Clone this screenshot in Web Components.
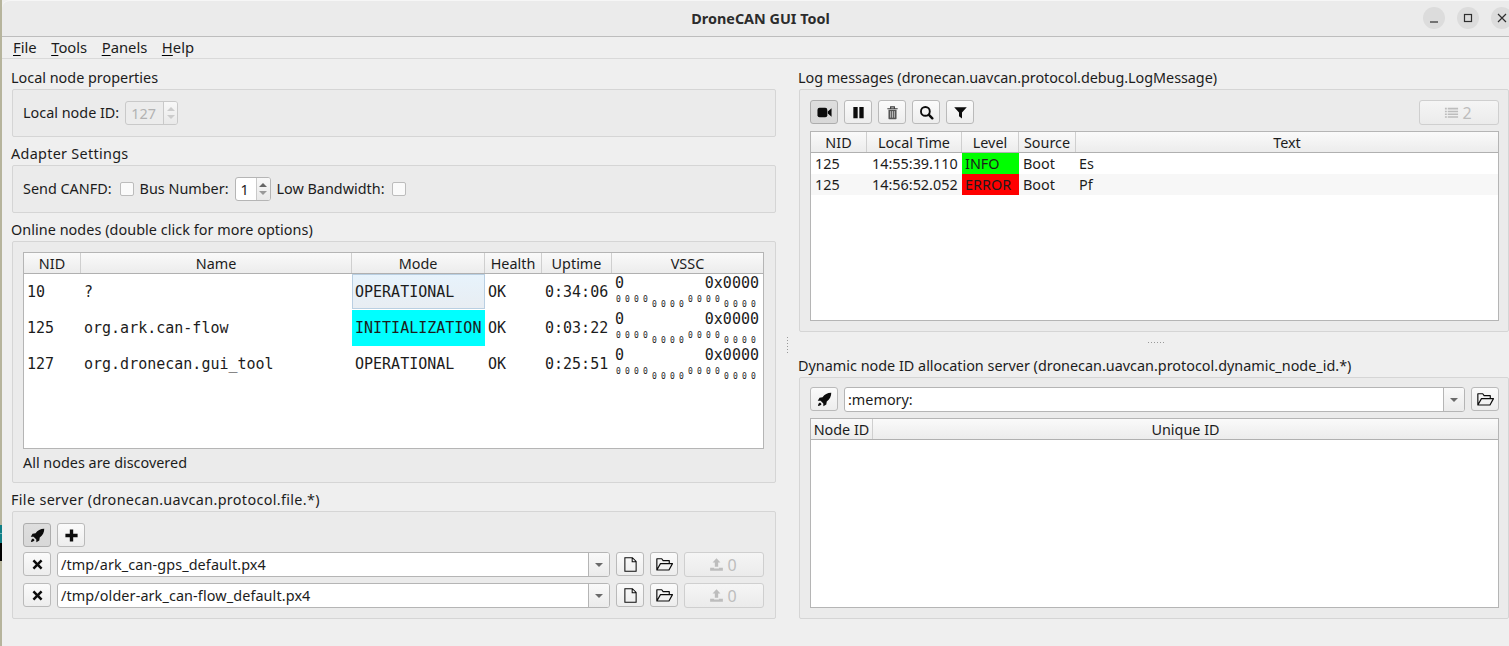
<!DOCTYPE html>
<html><head><meta charset="utf-8"><title>DroneCAN GUI Tool</title>
<style>
html,body{margin:0;padding:0;height:646px;overflow:hidden}
body{display:flex;font:14.4px/18px "Noto Sans",sans-serif;color:#1c1c1c;background:#efefef}
qt-menu-item u{text-decoration-thickness:1px;text-underline-offset:2px;text-decoration-color:#000}
</style></head><body>
<desk-edge></desk-edge>
<qt-window>
  <qt-titlebar slot="title">DroneCAN GUI Tool</qt-titlebar>
  <qt-menubar slot="menu">
    <qt-menu-item><u>F</u>ile</qt-menu-item>
    <qt-menu-item><u>T</u>ools</qt-menu-item>
    <qt-menu-item><u>P</u>anels</qt-menu-item>
    <qt-menu-item><u>H</u>elp</qt-menu-item>
  </qt-menubar>
  <qt-col slot="left">
    <qt-group heading="Local node properties" style="--box-h:48px;--pad-top:11px">
      <qt-line><span>Local node ID:</span><qt-spin value="127" disabled style="width:53px"></qt-spin></qt-line>
    </qt-group>
    <qt-group heading="Adapter Settings" style="--box-h:48px;--pad-top:11px;--track:.3px">
      <qt-line><span style="margin-right:2px">Send CANFD:</span><qt-check></qt-check><span>Bus Number:</span><qt-spin value="1" style="width:36px"></qt-spin><span style="margin-right:1px">Low Bandwidth:</span><qt-check></qt-check></qt-line>
    </qt-group>
    <qt-group heading="Online nodes (double click for more options)" style="--box-h:242px;--pad-top:10px;--track:.05px">
      <qt-table cols="57,271,133,57,70,151" heads="NID|Name|Mode|Health|Uptime|VSSC" style="height:197px;--row-h:36px;--font:15px 'DejaVu Sans Mono',monospace">
        <qt-row><qt-cell>10</qt-cell><qt-cell>?</qt-cell><qt-cell kind="sel">OPERATIONAL</qt-cell><qt-cell>OK</qt-cell><qt-cell>0:34:06</qt-cell><vssc-cell></vssc-cell></qt-row>
        <qt-row><qt-cell>125</qt-cell><qt-cell>org.ark.can-flow</qt-cell><qt-cell style="--bg:#00ffff">INITIALIZATION</qt-cell><qt-cell>OK</qt-cell><qt-cell>0:03:22</qt-cell><vssc-cell></vssc-cell></qt-row>
        <qt-row><qt-cell>127</qt-cell><qt-cell>org.dronecan.gui_tool</qt-cell><qt-cell>OPERATIONAL</qt-cell><qt-cell>OK</qt-cell><qt-cell>0:25:51</qt-cell><vssc-cell></vssc-cell></qt-row>
      </qt-table>
      <qt-status>All nodes are discovered</qt-status>
    </qt-group>
    <qt-group heading="File server (dronecan.uavcan.protocol.file.*)" style="--box-h:108px;--pad-top:11px;--track:.33px">
      <qt-line tight><qt-btn icon="rocket" checked></qt-btn><qt-btn icon="plus"></qt-btn></qt-line>
      <qt-line tight style="margin-top:5px"><qt-btn icon="times"></qt-btn><qt-combo value="/tmp/ark_can-gps_default.px4" style="--combo-track:.11px"></qt-combo><qt-btn icon="file"></qt-btn><qt-btn icon="folder"></qt-btn><qt-btn icon="upload" disabled wide>0</qt-btn></qt-line>
      <qt-line tight style="margin-top:6px"><qt-btn icon="times"></qt-btn><qt-combo value="/tmp/older-ark_can-flow_default.px4" style="--combo-track:.11px"></qt-combo><qt-btn icon="file"></qt-btn><qt-btn icon="folder"></qt-btn><qt-btn icon="upload" disabled wide>0</qt-btn></qt-line>
    </qt-group>
  </qt-col>
  <qt-vsplit slot="split"></qt-vsplit>
  <qt-col slot="right">
    <qt-group heading="Log messages (dronecan.uavcan.protocol.debug.LogMessage)" style="--box-h:243px;--pad-top:10px;--pad-r:9px;--track:-.04px">
      <qt-line tight><qt-btn icon="camera" checked></qt-btn><qt-btn icon="pause"></qt-btn><qt-btn icon="trash"></qt-btn><qt-btn icon="search"></qt-btn><qt-btn icon="filter"></qt-btn><qt-spacer></qt-spacer><qt-btn icon="list" disabled wide>2</qt-btn></qt-line>
      <qt-table cols="56,95,57,57,422" heads="NID|Local Time|Level|Source|Text" style="margin-top:6px;height:190px;--row-h:21px;--cell-pad:4px">
        <qt-row><qt-cell>125</qt-cell><qt-cell style="--cell-pad:5px">14:55:39.110</qt-cell><qt-cell style="--bg:#00ff00;--cell-pad:3px">INFO</qt-cell><qt-cell>Boot</qt-cell><qt-cell style="--cell-pad:3px">Es</qt-cell></qt-row>
        <qt-row alt><qt-cell>125</qt-cell><qt-cell style="--cell-pad:5px">14:56:52.052</qt-cell><qt-cell style="--bg:#ff0000;--cell-pad:3px">ERROR</qt-cell><qt-cell>Boot</qt-cell><qt-cell style="--cell-pad:3px">Pf</qt-cell></qt-row>
      </qt-table>
    </qt-group>
    <qt-hsplit></qt-hsplit>
    <qt-group heading="Dynamic node ID allocation server (dronecan.uavcan.protocol.dynamic_node_id.*)" style="--box-h:242px;--pad-top:9px;--pad-r:9px">
      <qt-line tight><qt-btn icon="rocket"></qt-btn><qt-combo value=":memory:"></qt-combo><qt-btn icon="folder"></qt-btn></qt-line>
      <qt-table cols="62,625" heads="Node ID|Unique ID" style="margin-top:6px;height:190px"></qt-table>
    </qt-group>
  </qt-col>
</qt-window>
<script>
const ICONS={
rocket:'<path fill="currentColor" d="M15.2.8C11.3.7 8.2 2.5 5.9 5.6L2.7 6.1.8 9.2l3 .1 2.9 2.9.1 3 3.1-1.9.5-3.2c3.1-2.3 4.9-5.4 4.8-9.3zM3.2 11.2c-1.1.4-1.8 1.3-2.2 3.8 2.5-.4 3.4-1.1 3.8-2.2z"/>',
plus:'<path fill="currentColor" d="M6.2 1.5h3.6v4.7h4.7v3.6H9.8v4.7H6.2V9.8H1.5V6.2h4.7z"/>',
times:'<path fill="currentColor" d="M4.6 2.7 8 6.1l3.4-3.4 1.9 1.9L9.9 8l3.4 3.4-1.9 1.9L8 9.9l-3.4 3.4-1.9-1.9L6.1 8 2.7 4.6z"/>',
file:'<path fill="none" stroke="currentColor" stroke-width="1.1" d="M2 .8h8l4 4v10.4H2zM9.8.8v4.2H14"/>',
folder:'<path fill="none" stroke="currentColor" stroke-width="1.1" stroke-linejoin="round" d="M.8 13.2V2.6h4.6l1.3 1.8h5.8v2.8M.8 13.2h11.4l3.3-6H4.2z"/>',
upload:'<path fill="currentColor" d="M8 1.2l4.2 4.6H9.8v4.6H6.2V5.8H3.8zM1.2 11.4h4.2v.9h5.2v-.9h4.2v3.2H1.2z"/>',
camera:'<rect x=".5" y="3" width="10.5" height="10" rx="2.2" fill="currentColor"/><path fill="currentColor" d="M11.5 7 15.5 3.4v9.2L11.5 9z"/>',
pause:'<path fill="currentColor" d="M2.5 2h4.6v12H2.5zM8.9 2h4.6v12H8.9z"/>',
trash:'<g fill="none" stroke="#3c3c3c"><path stroke-width="1.2" d="M2.5 4h11M6 3.8V2h4v1.8"/></g><path fill="#555" d="M3.7 5h8.6v9.4a.7.7 0 0 1-.7.7H4.4a.7.7 0 0 1-.7-.7z"/><path stroke="#ddd" stroke-width=".8" d="M6 6.5v7M8 6.5v7M10 6.5v7"/>',
search:'<circle cx="6.8" cy="6.8" r="4.7" fill="none" stroke="currentColor" stroke-width="2"/><path stroke="currentColor" stroke-width="2.6" stroke-linecap="round" d="M10.6 10.6l3.6 3.6"/>',
filter:'<path fill="currentColor" d="M1.3 2.3h13.4L9.6 8v6.4L6.4 12V8z"/>',
list:'<path fill="currentColor" d="M1 3h2v1.7H1zM4 3h11v1.7H4zM1 6h2v1.7H1zM4 6h11v1.7H4zM1 9h2v1.7H1zM4 9h11v1.7H4zM1 12h2v1.7H1zM4 12h11v1.7H4z"/>'
};
function def(name,css,html){
  customElements.define(name,class extends HTMLElement{
    constructor(){super();this.attachShadow({mode:'open'}).innerHTML='<style>'+css+'</style>'+html;}
  });
}
function defA(name,css,fn){
  customElements.define(name,class extends HTMLElement{
    connectedCallback(){if(this.shadowRoot)return;this.attachShadow({mode:'open'}).innerHTML='<style>'+css+'</style>'+fn(this);}
  });
}
def('desk-edge',':host{display:flex;flex-direction:column;width:2px;flex:none;background:#b6b49c}.gap{height:525px}.t1{height:8px;background:#0f7f86}.t2{height:1px;background:#6fb3b6}.t3{height:9px;background:#0f7f86}.k{height:18px;background:#000}','<div class="gap"></div><div class="t1"></div><div class="t2"></div><div class="t3"></div><div class="k"></div>');
def('qt-window',`:host{display:grid;flex:none;width:1507px;height:646px;grid-template-columns:774px 23px 710px;grid-template-rows:37px 22px 1fr;background:#efefef;overflow:hidden}
.t{grid-column:1/4;grid-row:1}.m{grid-column:1/4;grid-row:2}.l{grid-column:1;grid-row:3;padding:2px 0 0 10px}.s{grid-column:2;grid-row:3}.r{grid-column:3;grid-row:3;padding-top:2px}`,
`<div class="t"><slot name="title"></slot></div><div class="m"><slot name="menu"></slot></div><div class="l"><slot name="left"></slot></div><div class="s"><slot name="split"></slot></div><div class="r"><slot name="right"></slot></div>`);
def('qt-titlebar',`:host{display:flex;position:relative;align-items:center;justify-content:center;height:37px;box-sizing:border-box;background:#ebebeb;border-top:1px solid #f6f6f6;border-bottom:1px solid #bdbdbd;border-top-left-radius:8px;font-weight:700;font-size:14.4px;color:#2c2c2c}
.b{position:absolute;top:6px;right:0;display:flex;gap:12px;margin-right:-4px}
.c{width:22px;height:22px;border-radius:50%;background:#dcdcdc;display:flex;align-items:center;justify-content:center}
svg{width:12px;height:12px;stroke:#2e2e2e;fill:none;stroke-width:1.2}`,
`<span style="margin-left:10px"><slot></slot></span><div class="b"><div class="c"><svg viewBox="0 0 12 12"><path d="M2 10h8"/></svg></div><div class="c"><svg viewBox="0 0 12 12"><rect x="2.5" y="2.5" width="7" height="7"/></svg></div><div class="c"><svg viewBox="0 0 12 12"><path d="M2 2l8 8M10 2l-8 8"/></svg></div></div>`);
def('qt-menubar',':host{display:flex;height:22px;box-sizing:border-box;padding:0 0 2px 11px;align-items:center;background:#efefef;border-bottom:1px solid #d9d9d9}','<slot></slot>');
def('qt-menu-item',':host{display:block;margin-right:14.5px;font-size:14.8px;line-height:20px}','<slot></slot>');
def('qt-col',':host{display:block}','<slot></slot>');
defA('qt-group',`:host{display:block;width:100%}
.h{height:22px;padding-top:6px;line-height:22px;font-size:14.4px;white-space:nowrap;margin-left:-1px;letter-spacing:var(--track,0)}
.b{box-sizing:border-box;height:var(--box-h);background:#ebebeb;border:1px solid #d5d5d5;border-radius:2px;padding:var(--pad-top,0) var(--pad-r,11px) 0 10px;display:flex;flex-direction:column;letter-spacing:0}`,
e=>`<div class="h">${e.getAttribute('heading')}</div><div class="b" part="box"><slot></slot></div>`);
def('qt-line',`:host{display:flex;align-items:center;gap:6px;min-height:24px;font-size:14.4px;white-space:nowrap;letter-spacing:0}:host([tight]){align-items:flex-start}`,'<slot></slot>');
def('qt-spacer',':host{flex:1}','');
defA('qt-spin',`:host{display:inline-flex;box-sizing:border-box;height:24px;background:#fff;border:1px solid #b5b5b5;border-radius:3px;flex:none}
:host([disabled]){background:#ececec;border-color:#c9c9c9;color:#b2b2b2}
.v{flex:1;padding-left:5px;line-height:23px;font-size:14.4px}
.a{width:13px;border-left:1px solid #c9c9c9;background:linear-gradient(#f8f8f8,#e9e9e9);display:flex;flex-direction:column;align-items:center;justify-content:center;gap:4px;border-radius:0 2px 2px 0}
i{width:0;height:0;border-left:4px solid transparent;border-right:4px solid transparent}
.u{border-bottom:4px solid #666}.d{border-top:4px solid #999}
:host([disabled]) .u,:host([disabled]) .d{border-bottom-color:#ccc;border-top-color:#ccc}`,e=>`<div class="v">${e.getAttribute('value')}</div><div class="a"><i class="u"></i><i class="d"></i></div>`);
def('qt-check',':host{display:block;flex:none;width:14px;height:14px;box-sizing:border-box;background:#fafafa;border:1px solid #bcbcbc;border-radius:2px;margin-top:-1px}','');
defA('fa-icon',':host{display:inline-flex}svg{display:block}',e=>{const s=e.getAttribute('size')||16;return `<svg width="${s}" height="${s}" viewBox="0 0 16 16">${ICONS[e.getAttribute('name')]||''}</svg>`});
defA('qt-btn',`:host{display:flex;flex:none;box-sizing:border-box;width:28px;height:24px;align-items:center;justify-content:center;gap:3px;border:1px solid #bababa;border-radius:3px;background:linear-gradient(#fbfbfb,#ededed);color:#0c0c0c;font-size:16px}
:host([checked]){background:linear-gradient(#dedede,#d8d8d8);border-color:#adadad}
:host([disabled]){border-color:#cfcfcf;background:linear-gradient(#f5f5f5,#ebebeb);color:#bdbdbd}
:host([wide]){width:80px;height:25px;padding-right:2px}`,e=>`<fa-icon name="${e.getAttribute('icon')}" size="${e.getAttribute('icon')==='folder'?17:15}"></fa-icon><slot></slot>`);
defA('qt-combo',`:host{display:flex;flex:1;min-width:0;box-sizing:border-box;height:25px;background:#fff;border:1px solid #b5b5b5;border-radius:3px;font-size:14.4px}
.v{flex:1;padding-left:3px;line-height:23px;white-space:nowrap;overflow:hidden;letter-spacing:var(--combo-track,0)}
.a{width:20px;border-left:1px solid #b5b5b5;background:linear-gradient(#f9f9f9,#ebebeb);display:flex;align-items:center;justify-content:center;border-radius:0 2px 2px 0}
i{width:0;height:0;border-left:4px solid transparent;border-right:4px solid transparent;border-top:4px solid #6a6a6a}`,e=>`<div class="v">${e.getAttribute('value')}</div><div class="a"><i></i></div>`);
defA('qt-table',`:host{display:flex;flex-direction:column;box-sizing:border-box;border:1px solid #b5b5b5;background:#fff;overflow:hidden;font-size:14.4px;flex:none}
.h{display:grid;height:20px;flex:none;border-bottom:1px solid #b0b0b0;background:linear-gradient(#fafafa,#ececec)}
.h div{text-align:center;line-height:22px;height:20px;border-right:1px solid #cfcfcf;box-sizing:border-box;white-space:nowrap;overflow:hidden}
.h div:last-child{border-right:0}`,e=>{
  const c=e.getAttribute('cols').split(',').map(x=>x+'px').join(' ');e.style.setProperty('--cols',c);
  return `<div class="h" style="grid-template-columns:${c}">${e.getAttribute('heads').split('|').map(t=>`<div>${t}</div>`).join('')}</div><slot></slot>`});
def('qt-row',':host{display:grid;grid-template-columns:var(--cols);height:var(--row-h);font:var(--font,inherit);white-space:nowrap}:host([alt]){background:#f7f7f7}','<slot></slot>');
def('qt-cell',':host{display:flex;align-items:center;padding-left:var(--cell-pad,3px);background:var(--bg,transparent);overflow:hidden}:host([kind=sel]){background:linear-gradient(#e7f3fc,#e8edf2);box-shadow:inset 0 0 0 1px #b9cfe2;margin-bottom:1px}','<slot></slot>');
def('vssc-cell',`:host{display:flex;flex-direction:column;padding:1px 4px 0 3px;font:15px/17px "DejaVu Sans Mono",monospace}
.t{display:flex;justify-content:space-between;height:18px}
.b{display:flex;font-size:8px;line-height:8px;letter-spacing:4.2px;height:14px;margin:3px 0 0 1px}
.g{width:36px}.o{margin-top:5px}`,
`<div class="t"><span>0</span><span>0x0000</span></div><div class="b"><span class="g">0000</span><span class="g o">0000</span><span class="g">0000</span><span class="g o">0000</span></div>`);
def('qt-status',':host{display:block;font-size:14.4px;line-height:28px}','<slot></slot>');
def('qt-vsplit',`:host{display:flex;flex-direction:column;align-items:center;padding-top:278px;gap:2px;height:100%;box-sizing:border-box}
i{width:1px;height:1px;background:#999;flex:none}`,'<i></i><i></i><i></i><i></i><i></i><i></i>');
def('qt-hsplit',`:host{display:flex;height:17px;align-items:center;justify-content:center;gap:2px;padding:3px 0 0 4px;box-sizing:border-box}
i{width:1px;height:1px;background:#999;flex:none}`,'<i></i><i></i><i></i><i></i><i></i><i></i>');
</script>
</body></html>
